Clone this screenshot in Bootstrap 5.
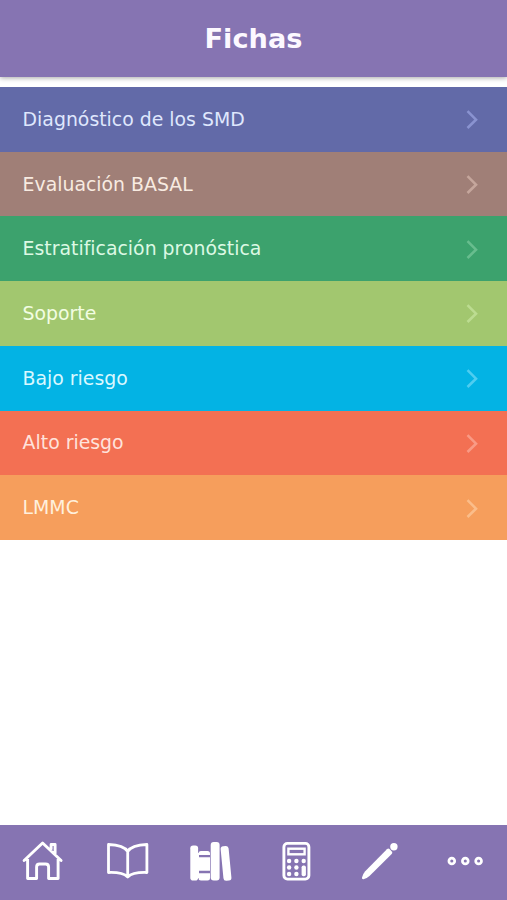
<!DOCTYPE html>
<html lang="es">
<head>
<meta charset="utf-8">
<meta name="viewport" content="width=device-width, initial-scale=1">
<title>Fichas</title>
<link href="https://cdn.jsdelivr.net/npm/bootstrap@5.3.0/dist/css/bootstrap.min.css" rel="stylesheet">
<style>
body { font-family: "DejaVu Sans", sans-serif; background: #fff; }
.top-bar { height: 77px; background: #8674b2; box-shadow: 0 1px 5px rgba(0,0,0,.35); }
.top-title { font-size: 27.2px; line-height: 1; color: #fcf8ff; }
.sheet-list { margin-top: 10px; }
.sheet-item { height: 64.71px; padding: 0 28.5px 0 22.6px; font-size: 18.86px; line-height: 1; }
.sheet-item:focus-visible { outline: 2px solid #fff; outline-offset: -4px; }
.s1 { background: #626aa8; color: #dfe7fd; --chev: #8a93d0; }
.s2 { background: #a07f77; color: #f8ebe1; --chev: #c5a69c; }
.s3 { background: #3ca26d; color: #dcf9e4; --chev: #68bd8e; }
.s4 { background: #a2c76f; color: #f2fde2; --chev: #bcdc91; }
.s5 { background: #03b3e4; color: #d9f8ff; --chev: #4fcdf0; }
.s6 { background: #f37053; color: #ffe3dc; --chev: #f99a85; }
.s7 { background: #f69e5c; color: #fff0dc; --chev: #fbbd8a; }
.chev { stroke: var(--chev); }
.tab-bar { height: 75px; padding-bottom: 3px; background: #8674b2; }
.tab-bar a { color: #fff; }
</style>
<script src="https://cdn.jsdelivr.net/npm/bootstrap@5.3.0/dist/js/bootstrap.bundle.min.js" defer></script>
</head>
<body class="vh-100 d-flex flex-column overflow-hidden">
<header class="top-bar d-flex align-items-center justify-content-center flex-shrink-0">
  <h1 class="top-title fw-bold mb-0">Fichas</h1>
</header>
<main class="sheet-list flex-grow-1">
  <a href="#" class="sheet-item s1 d-flex align-items-center justify-content-between text-decoration-none"><span>Diagnóstico de los SMD</span><svg class="chev" width="14" height="20" viewBox="0 0 14 20" fill="none" stroke-width="2.6"><path d="M2.5 2.2 11 10.700 2.5 19"/></svg></a>
  <a href="#" class="sheet-item s2 d-flex align-items-center justify-content-between text-decoration-none"><span>Evaluación BASAL</span><svg class="chev" width="14" height="20" viewBox="0 0 14 20" fill="none" stroke-width="2.6"><path d="M2.5 2.2 11 10.700 2.5 19"/></svg></a>
  <a href="#" class="sheet-item s3 d-flex align-items-center justify-content-between text-decoration-none"><span>Estratificación pronóstica</span><svg class="chev" width="14" height="20" viewBox="0 0 14 20" fill="none" stroke-width="2.6"><path d="M2.5 2.2 11 10.700 2.5 19"/></svg></a>
  <a href="#" class="sheet-item s4 d-flex align-items-center justify-content-between text-decoration-none"><span>Soporte</span><svg class="chev" width="14" height="20" viewBox="0 0 14 20" fill="none" stroke-width="2.6"><path d="M2.5 2.2 11 10.700 2.5 19"/></svg></a>
  <a href="#" class="sheet-item s5 d-flex align-items-center justify-content-between text-decoration-none"><span>Bajo riesgo</span><svg class="chev" width="14" height="20" viewBox="0 0 14 20" fill="none" stroke-width="2.6"><path d="M2.5 2.2 11 10.700 2.5 19"/></svg></a>
  <a href="#" class="sheet-item s6 d-flex align-items-center justify-content-between text-decoration-none"><span>Alto riesgo</span><svg class="chev" width="14" height="20" viewBox="0 0 14 20" fill="none" stroke-width="2.6"><path d="M2.5 2.2 11 10.700 2.5 19"/></svg></a>
  <a href="#" class="sheet-item s7 d-flex align-items-center justify-content-between text-decoration-none"><span>LMMC</span><svg class="chev" width="14" height="20" viewBox="0 0 14 20" fill="none" stroke-width="2.6"><path d="M2.5 2.2 11 10.700 2.5 19"/></svg></a>
</main>
<nav class="tab-bar row g-0 row-cols-6 align-items-center flex-shrink-0">
  <a href="#" class="col d-flex justify-content-center" aria-label="Inicio">
    <svg width="44" height="44" viewBox="-0.600 0 44 44" fill="none" stroke="currentColor" stroke-width="2.9" stroke-linejoin="round" stroke-linecap="round"><path d="M3.500 21.500 22 4 40.500 21.500M7 20V39.500H16V28Q16 25 19 25H25Q28 25 28 28V39.500H37.500V20M30.500 10V5.500H34.500V14.500"/></svg>
  </a>
  <a href="#" class="col d-flex justify-content-center" aria-label="Libro">
    <svg width="44" height="44" viewBox="-0.700 0 44 44" fill="none" stroke="currentColor" stroke-width="2.8" stroke-linejoin="round"><path d="M22 12.500Q18 6 2.800 5.500V33.500Q17 33 22 38Q27 33 41.200 33.500V5.500Q26 6 22 12.500ZV38"/></svg>
  </a>
  <a href="#" class="col d-flex justify-content-center" aria-label="Fichas">
    <svg width="44" height="44" viewBox="0 0 44 44" fill="currentColor"><rect x="1.300" y="6.500" width="7.800" height="35" rx="2.800"/><path d="M9.500 16V14.500Q9.500 12 12 12H18.500Q21 12 21 14.500V16ZM9.500 18.300H21V31.800H9.500ZM9.500 34.200H21V39Q21 41.500 18.500 41.500H12Q9.500 41.500 9.500 39ZM8.800 14H10V39H8.800Z"/><rect x="21.700" y="3" width="8.900" height="38.500" rx="3"/><rect x="33" y="7" width="8" height="34.700" rx="2.800" transform="rotate(-5.500 37 24)"/></svg>
  </a>
  <a href="#" class="col d-flex justify-content-center" aria-label="Calculadora">
    <svg width="44" height="44" viewBox="-0.400 0 44 44" fill="none" stroke="currentColor"><rect x="9.500" y="4.400" width="25" height="35.700" rx="3.500" stroke-width="2.900"/><rect x="14" y="9.700" width="16.200" height="5.600" stroke-width="2.400"/><g fill="currentColor" stroke="none"><circle cx="14.700" cy="22" r="2.200"/><circle cx="22" cy="22" r="2.200"/><circle cx="29.300" cy="22" r="2.200"/><circle cx="14.700" cy="28.500" r="2.200"/><circle cx="22" cy="28.500" r="2.200"/><circle cx="14.700" cy="35" r="2.200"/><circle cx="22" cy="35" r="2.200"/><rect x="27.200" y="26.500" width="4.300" height="10.700" rx="1.800"/></g></svg>
  </a>
  <a href="#" class="col d-flex justify-content-center" aria-label="Notas">
    <svg width="44" height="44" viewBox="0 0 44 44" fill="currentColor"><circle cx="35.900" cy="7.800" r="3.700"/><path d="M28.900 10.300Q30.300 8.900 31.500 10.100L33.800 12.400Q35 13.600 33.700 15L11.500 36.900Q8.500 39.500 5.500 40.200Q3.600 40.400 4 38.500Q4.800 35 7.200 32.300Z"/></svg>
  </a>
  <a href="#" class="col d-flex justify-content-center" aria-label="Más">
    <svg width="44" height="44" viewBox="0 0 44 44" fill="none" stroke="currentColor" stroke-width="2.700"><circle cx="8.800" cy="22" r="2.900"/><circle cx="22.300" cy="22" r="2.900"/><circle cx="35.600" cy="22" r="2.900"/></svg>
  </a>
</nav>
</body>
</html>
